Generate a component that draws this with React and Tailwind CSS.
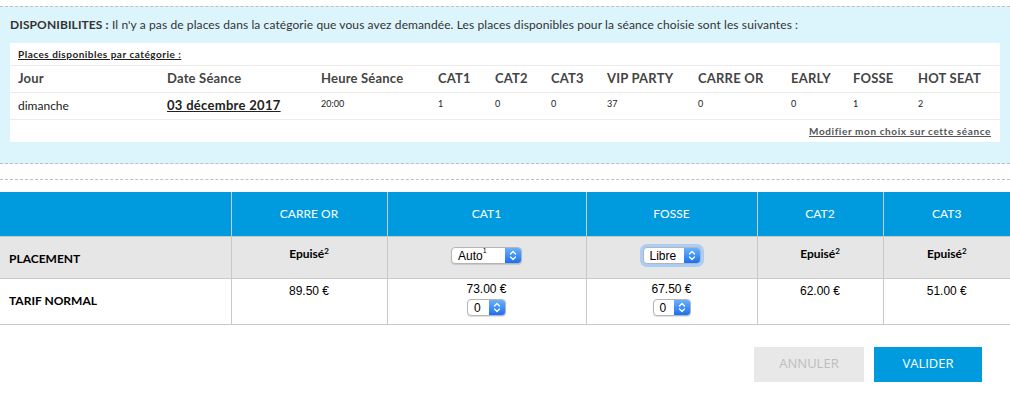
import React from "react";

const Chevrons = () => (
  <svg width="8" height="11" viewBox="0 0 8 11" fill="none" stroke="white" strokeWidth="1.3" strokeLinecap="round" strokeLinejoin="round">
    <path d="M1.5 4 L4 1.5 L6.5 4" />
    <path d="M1.5 7 L4 9.5 L6.5 7" />
  </svg>
);

function MacSelect({ children, width, focus }) {
  return (
    <div
      className={`inline-flex h-[17px] items-stretch rounded-[4px] border border-[#b5b5b5] bg-white shadow-[0_1px_1px_rgba(0,0,0,0.12)] ${focus ? "ring-[3px] ring-[#a9cdf5]" : ""}`}
      style={{ width }}
    >
      <div className="flex flex-1 items-center pl-[6px] text-[12px] leading-none text-black [font-family:'Liberation_Sans',sans-serif]">
        {children}
      </div>
      <div className="flex w-[16px] items-center justify-center rounded-r-[3px] bg-gradient-to-b from-[#69b1fb] to-[#1a6ff1]">
        <Chevrons />
      </div>
    </div>
  );
}

const topCols = "grid grid-cols-[149px_154px_117px_57px_56px_56px_91px_93px_62px_65px_1fr] px-2";

export default function App() {
  const heads = ["Jour", "Date Séance", "Heure Séance", "CAT1", "CAT2", "CAT3", "VIP PARTY", "CARRE OR", "EARLY", "FOSSE", "HOT SEAT"];
  const small = ["20:00", "1", "0", "0", "37", "0", "0", "1", "2"];
  return (
    <div className="w-[1010px] h-[398px] bg-white overflow-hidden [font-family:Lato,'Open_Sans',sans-serif] text-[#333]">
      <div className="pt-[6px]">
        <div className="border-y border-dashed border-[#bfbfbf] bg-[#dcf4fc] px-[10px] pt-[9px] pb-[21px]">
          <div className="h-[18px] text-[12px] leading-[18px] text-[#333] tracking-[0.1px]">
            <span className="font-bold">DISPONIBILITES :</span> Il n'y a pas de places dans la catégorie que vous avez demandée. Les places disponibles pour la séance choisie sont les suivantes :
          </div>
          <div className="mt-[9px] bg-white">
            <div className="flex h-[23px] items-center px-2 border-b border-[#ececec]">
              <span className="text-[10px] font-bold underline text-[#222] tracking-[0.5px]">Places disponibles par catégorie :</span>
            </div>
            <div className={`${topCols} h-[27px] items-center border-b border-[#ececec] text-[13px] font-bold text-[#444] tracking-[0.2px]`}>
              {heads.map((h) => (
                <div key={h} className="whitespace-nowrap">{h}</div>
              ))}
            </div>
            <div className={`${topCols} h-[27px] items-center border-b border-[#ececec]`}>
              <div className="text-[12px] text-[#222]">dimanche</div>
              <div className="text-[13px] font-bold underline text-[#222] tracking-[0.3px]">03 décembre 2017</div>
              {small.map((s, i) => (
                <div key={i} className="text-[9px] text-[#222] -mt-[4px]">{s}</div>
              ))}
            </div>
            <div className="flex h-[22px] items-center justify-end pr-[9px]">
              <span className="text-[10px] font-bold underline text-[#555] tracking-[0.6px]">Modifier mon choix sur cette séance</span>
            </div>
          </div>
        </div>
        <div className="mt-[15px] border-t border-dashed border-[#bfbfbf]" />
      </div>

      <table className="mt-[12px] w-[1010px] table-fixed border-collapse text-[12px]">
        <colgroup>
          <col className="w-[231px]" />
          <col className="w-[156px]" />
          <col className="w-[199px]" />
          <col className="w-[171px]" />
          <col className="w-[126px]" />
          <col className="w-[127px]" />
        </colgroup>
        <thead>
          <tr className="h-[44px] bg-[#009bdf] text-white">
            <th className="border-r border-[#c9c9c9]"></th>
            {["CARRE OR", "CAT1", "FOSSE", "CAT2", "CAT3"].map((c, i) => (
              <th key={c} className={`font-normal text-[12px] ${i < 4 ? "border-r border-[#c9c9c9]" : ""}`}>{c}</th>
            ))}
          </tr>
        </thead>
        <tbody>
          <tr className="h-[42px] bg-[#e6e6e6] border-y border-[#c9c9c9]">
            <td className="pl-[9px] pt-[3px] align-middle font-bold text-[12px] text-black border-r border-[#c9c9c9]">PLACEMENT</td>
            <td className="pt-[8px] align-top text-center font-bold text-black border-r border-[#c9c9c9]">Epuisé<sup className="text-[8px]">2</sup></td>
            <td className="pt-[10px] align-top text-center border-r border-[#c9c9c9]">
              <MacSelect width={71}>Auto<sup className="text-[7px] -mt-[2px]">1</sup></MacSelect>
            </td>
            <td className="pt-[10px] align-top text-center border-r border-[#c9c9c9]">
              <MacSelect width={58} focus>Libre</MacSelect>
            </td>
            <td className="pt-[8px] align-top text-center font-bold text-black border-r border-[#c9c9c9]">Epuisé<sup className="text-[8px]">2</sup></td>
            <td className="pt-[8px] align-top text-center font-bold text-black">Epuisé<sup className="text-[8px]">2</sup></td>
          </tr>
          <tr className="h-[46px] border-b border-[#c9c9c9]">
            <td className="pl-[9px] align-middle font-bold text-[12px] text-black border-r border-[#c9c9c9]">TARIF NORMAL</td>
            <td className="pt-[3px] align-top text-center text-[12px] text-black border-r border-[#c9c9c9] [font-family:'Liberation_Sans',sans-serif]">89.50 €</td>
            <td className="pt-[3px] align-top text-center text-[12px] text-black border-r border-[#c9c9c9] [font-family:'Liberation_Sans',sans-serif]">
              <div className="leading-[14px]">73.00 €</div>
              <div className="mt-[3px]"><MacSelect width={39}>0</MacSelect></div>
            </td>
            <td className="pt-[3px] align-top text-center text-[12px] text-black border-r border-[#c9c9c9] [font-family:'Liberation_Sans',sans-serif]">
              <div className="leading-[14px]">67.50 €</div>
              <div className="mt-[3px]"><MacSelect width={38}>0</MacSelect></div>
            </td>
            <td className="pt-[3px] align-top text-center text-[12px] text-black border-r border-[#c9c9c9] [font-family:'Liberation_Sans',sans-serif]">62.00 €</td>
            <td className="pt-[3px] align-top text-center text-[12px] text-black [font-family:'Liberation_Sans',sans-serif]">51.00 €</td>
          </tr>
        </tbody>
      </table>

      <div className="mt-[22px] flex justify-end gap-[10px] pr-[28px] [font-family:'Open_Sans',sans-serif]">
        <button className="h-[35px] w-[110px] bg-[#e8e8e8] text-[13px] text-[#bdbdbd]">ANNULER</button>
        <button className="h-[35px] w-[108px] bg-[#009bdf] text-[13px] text-white">VALIDER</button>
      </div>
    </div>
  );
}
